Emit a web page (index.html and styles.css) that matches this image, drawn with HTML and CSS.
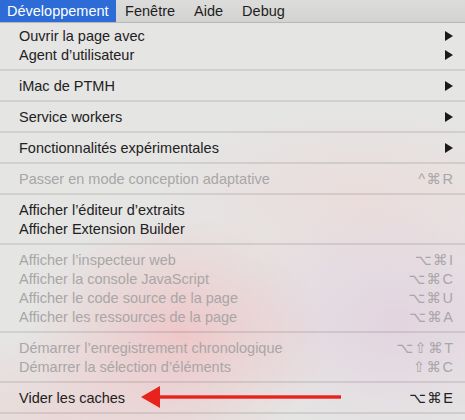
FILE: index.html
```html
<!DOCTYPE html>
<html lang="fr">
<head>
<meta charset="utf-8">
<title>Menu Développement</title>
<link rel="stylesheet" href="styles.css">
</head>
<body>
<div class="screen">
  <div class="menubar">
    <span class="mb-item active">Développement</span>
    <span class="mb-item">Fenêtre</span>
    <span class="mb-item">Aide</span>
    <span class="mb-item">Debug</span>
  </div>
  <div class="menu">
    <div class="item"><span>Ouvrir la page avec</span><svg class="sub" viewBox="0 0 8 10"><polygon points="0,0 8,5 0,10"/></svg></div>
    <div class="item"><span>Agent d’utilisateur</span><svg class="sub" viewBox="0 0 8 10"><polygon points="0,0 8,5 0,10"/></svg></div>
    <div class="sep"></div>
    <div class="item"><span>iMac de PTMH</span><svg class="sub" viewBox="0 0 8 10"><polygon points="0,0 8,5 0,10"/></svg></div>
    <div class="sep"></div>
    <div class="item"><span>Service workers</span><svg class="sub" viewBox="0 0 8 10"><polygon points="0,0 8,5 0,10"/></svg></div>
    <div class="sep"></div>
    <div class="item"><span>Fonctionnalités expérimentales</span><svg class="sub" viewBox="0 0 8 10"><polygon points="0,0 8,5 0,10"/></svg></div>
    <div class="sep"></div>
    <div class="item disabled"><span>Passer en mode conception adaptative</span><span class="key">^⌘R</span></div>
    <div class="sep"></div>
    <div class="item"><span>Afficher l’éditeur d’extraits</span></div>
    <div class="item"><span>Afficher Extension Builder</span></div>
    <div class="sep"></div>
    <div class="item disabled"><span>Afficher l’inspecteur web</span><span class="key">⌥⌘I</span></div>
    <div class="item disabled"><span>Afficher la console JavaScript</span><span class="key">⌥⌘C</span></div>
    <div class="item disabled"><span>Afficher le code source de la page</span><span class="key">⌥⌘U</span></div>
    <div class="item disabled"><span>Afficher les ressources de la page</span><span class="key">⌥⌘A</span></div>
    <div class="sep"></div>
    <div class="item disabled"><span>Démarrer l’enregistrement chronologique</span><span class="key">⌥⇧⌘T</span></div>
    <div class="item disabled"><span>Démarrer la sélection d’éléments</span><span class="key">⇧⌘C</span></div>
    <div class="sep"></div>
    <div class="item"><span>Vider les caches</span><span class="key">⌥⌘E</span></div>
    <div class="sep"></div>
  </div>
  <svg class="annot-arrow" viewBox="0 0 205 24" width="205" height="24">
    <polygon points="0,12 19,1 19,23" fill="#e8231c"/>
    <rect x="17" y="10.3" width="183" height="3.4" fill="#e8231c"/>
  </svg>
</div>
</body>
</html>
```
FILE: styles.css
```css
html, body {
  margin: 0;
  padding: 0;
}
body {
  width: 465px;
  height: 420px;
  overflow: hidden;
  font-family: "Liberation Sans", Arial, sans-serif;
}
.screen {
  position: relative;
  width: 465px;
  height: 420px;
  overflow: hidden;
  background:
    radial-gradient(ellipse 150px 120px at 180px 335px, rgba(241, 192, 194, 0.8), rgba(241, 192, 194, 0) 100%),
    radial-gradient(ellipse 170px 120px at 395px 320px, rgba(226, 206, 222, 0.75), rgba(226, 206, 222, 0) 100%),
    radial-gradient(ellipse 200px 90px at 360px 200px, rgba(238, 214, 214, 0.6), rgba(238, 214, 214, 0) 100%),
    radial-gradient(ellipse 170px 90px at 60px 420px, rgba(236, 210, 210, 0.7), rgba(236, 210, 210, 0) 100%),
    #e5e5e4;
}
.menubar {
  display: flex;
  align-items: center;
  height: 22px;
  background: linear-gradient(#dcdcdb, #d3d3d2);
  border-bottom: 1px solid #b8b8b8;
  font-size: 14.5px;
  color: #1e1e1e;
}
.mb-item {
  height: 22px;
  line-height: 22px;
  padding: 0 9.5px;
}
.mb-item.active {
  background: #2d6bd6;
  color: #ffffff;
  padding: 0 7px;
}
.menu {
  padding-top: 3px;
  font-size: 14.5px;
  color: #222222;
}
.item {
  height: 19px;
  display: flex;
  align-items: center;
  justify-content: space-between;
  padding: 0 12px 0 19px;
  white-space: nowrap;
}
.item.disabled {
  color: #a9a6a7;
}
.key {
  font-family: "Liberation Sans", "DejaVu Sans", sans-serif;
  font-size: 14.5px;
  letter-spacing: 1.5px;
  margin-right: -1.5px;
}
.sub {
  width: 8px;
  height: 10px;
  fill: #1a1a1a;
}
.sep {
  height: 12px;
  display: flex;
  align-items: center;
}
.sep::after {
  content: "";
  flex: 1;
  height: 2px;
  background: rgba(0, 0, 0, 0.09);
}
.annot-arrow {
  position: absolute;
  left: 141px;
  top: 385px;
}
```
